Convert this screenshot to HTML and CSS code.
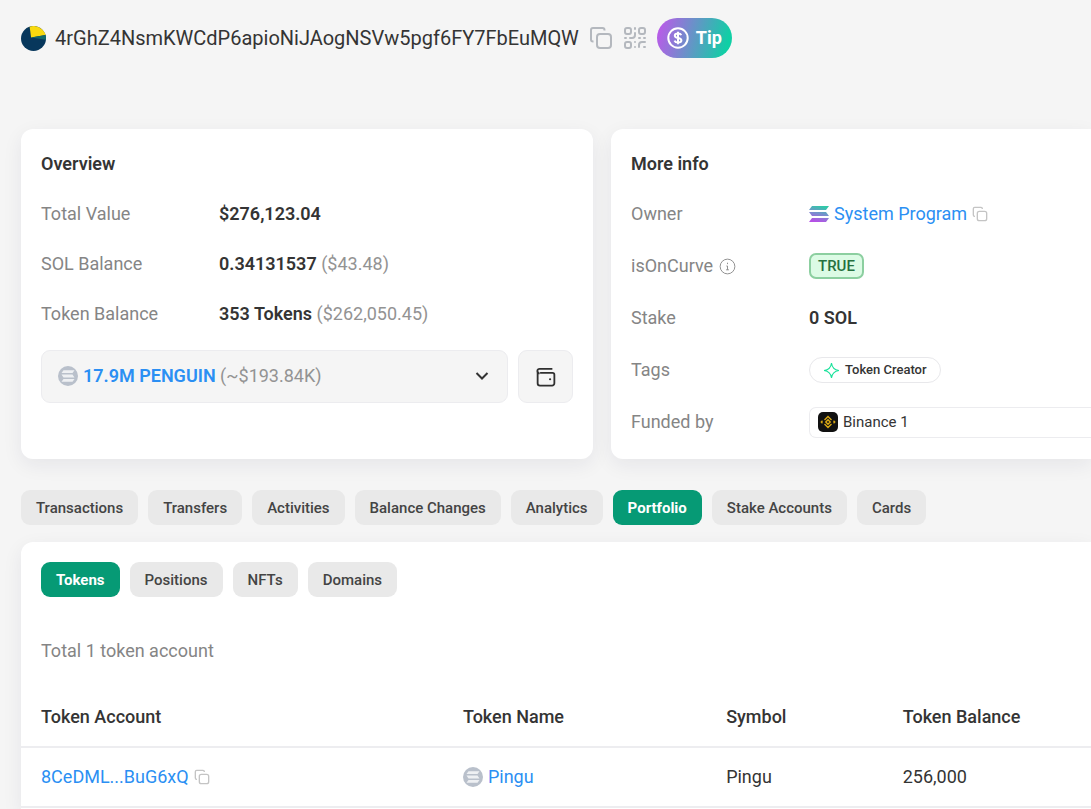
FILE: index.html
```html
<!DOCTYPE html>
<html lang="en">
<head>
<meta charset="utf-8">
<meta name="viewport" content="width=device-width, initial-scale=1">
<title>Account portfolio</title>
<link rel="stylesheet" href="styles.css">
</head>
<body>
<svg class="sprite" aria-hidden="true">
  <symbol id="copy" viewBox="0 0 24 24">
    <path d="M4.500 15.500H4a2 2 0 0 1-2-2V4a2 2 0 0 1 2-2h9.500a2 2 0 0 1 2 2v.5" />
    <rect x="8" y="8" width="14" height="14" rx="3" />
  </symbol>
  <symbol id="coin" viewBox="0 0 20 20">
    <circle cx="10" cy="10" r="10" fill="#b9c0cb"/>
    <path d="M5.500 4.200h11l-2 2.800H3.500zM3.500 8.600h11l2 2.800h-11zM5.500 13h11l-2 2.800H3.500z" fill="#eef0f3"/>
  </symbol>
</svg>
<header class="account">
  <svg class="avatar" viewBox="0 0 26 26" aria-hidden="true">
    <circle cx="13" cy="13" r="13" fill="#07375c"/>
    <path d="M10.500 12 9 .7A13 13 0 0 1 25.600 9.400z" fill="#f8d90f"/>
    <path d="M10.500 12l15.100-2.600q.6 3 .2 5z" fill="#11686a"/>
  </svg>
  <h1 class="address">4rGhZ4NsmKWCdP6apioNiJAogNSVw5pgf6FY7FbEuMQW</h1>
  <button class="icon-button" type="button" aria-label="Copy address"><svg class="icon icon-large"><use href="#copy"/></svg></button>
  <button class="icon-button" type="button" aria-label="Show QR code">
    <svg class="icon icon-large icon-qr" viewBox="0 0 24 24">
      <rect x="2" y="2" width="6" height="6" rx="2"/><rect x="16" y="2" width="6" height="6" rx="2"/><rect x="2" y="16" width="6" height="6" rx="2"/>
      <path d="M12 2v1M12 7v2a3 3 0 0 1-3 3H7M2 12h1M12 16v0M16 12h1M21 12h1M12 21v0M16 21v-2a3 3 0 0 1 3-3h3M21 21h1"/>
    </svg>
  </button>
  <button class="tip" type="button">
    <svg class="tip-icon" viewBox="0 0 22 22" aria-hidden="true"><circle cx="11" cy="11" r="9.700"/><path d="M14.300 8.200c-.5-1.100-1.700-1.700-3.300-1.700-1.900 0-3.200.8-3.200 2.200 0 3.100 6.600 1.400 6.600 4.500 0 1.500-1.400 2.300-3.400 2.300-1.800 0-3-.7-3.500-1.900M11 4.800v12.400"/></svg>
    Tip
  </button>
</header>
<main>
  <div class="cards">
    <section class="card">
      <h2 class="card-title">Overview</h2>
      <dl class="facts">
        <dt>Total Value</dt><dd><b>$276,123.04</b></dd>
        <dt>SOL Balance</dt><dd><b>0.34131537</b> <span class="muted">($43.48)</span></dd>
        <dt>Token Balance</dt><dd><b>353 Tokens</b> <span class="muted">($262,050.45)</span></dd>
      </dl>
      <div class="picker">
        <button class="picker-main" type="button" aria-haspopup="listbox">
          <svg class="coin" aria-hidden="true"><use href="#coin"/></svg>
          <span class="picker-label"><b class="blue">17.9M PENGUIN</b> <span class="muted">(~$193.84K)</span></span>
          <svg class="chevron" viewBox="0 0 14 14" aria-hidden="true"><path d="M1.500 4l5.500 5.500L12.500 4"/></svg>
        </button>
        <button class="picker-wallet" type="button" aria-label="Open wallet">
          <svg class="wallet" viewBox="0 0 22 22" aria-hidden="true"><path d="M18 2H4a2.500 2.500 0 0 0 0 5M1.800 4.500V18A2.500 2.500 0 0 0 4.300 20.500H17.700A2.500 2.500 0 0 0 20.200 18V8.500A2 2 0 0 0 18.200 6.500H4.500"/><circle cx="15.500" cy="13.500" r="1.200"/></svg>
        </button>
      </div>
    </section>
    <section class="card card-bleed">
      <h2 class="card-title">More info</h2>
      <dl class="facts facts-info">
        <dt>Owner</dt>
        <dd>
          <svg class="solana" viewBox="0 0 20 16" aria-hidden="true">
            <defs><linearGradient id="sol" gradientUnits="userSpaceOnUse" x1="12" y1="0" x2="8" y2="16"><stop offset="0" stop-color="#2fc9a8"/><stop offset=".5" stop-color="#7b8ccf"/><stop offset="1" stop-color="#b64fe6"/></linearGradient></defs>
            <path d="M3 0h17l-3 4H0zM0 6h17l3 4H3zM3 12h17l-3 4H0z" fill="url(#sol)"/>
          </svg>
          <a class="blue" href="#owner">System Program</a>
          <button class="icon-button" type="button" aria-label="Copy owner"><svg class="icon icon-light"><use href="#copy"/></svg></button>
        </dd>
        <dt>isOnCurve <svg class="info" viewBox="0 0 18 18" aria-hidden="true"><circle cx="9" cy="9" r="7.800"/><path d="M9 5v1.500M7.800 8.500H9v4M7.500 12.500h3"/></svg></dt>
        <dd><span class="true">TRUE</span></dd>
        <dt>Stake</dt><dd><b>0 SOL</b></dd>
        <dt>Tags</dt>
        <dd><span class="tag"><svg class="spark" viewBox="0 0 16 16" aria-hidden="true"><path d="M8 1Q8.800 7.200 15 8 8.800 8.800 8 15 7.200 8.800 1 8 7.200 7.200 8 1z"/></svg>Token Creator</span></dd>
        <dt>Funded by</dt>
        <dd><a class="funder" href="#binance"><svg class="binance" viewBox="0 0 20 20" aria-hidden="true"><rect width="20" height="20" rx="5" fill="#111"/><path d="M6.500 8 10 4.500 13.500 8M6.500 12l3.500 3.500 3.500-3.500M4.500 8.800 3.300 10l1.200 1.200M15.500 8.800l1.200 1.200-1.200 1.200M10 7.800 12.200 10 10 12.200 7.800 10z" fill="none" stroke="#dba914" stroke-width="1.400"/></svg>Binance 1</a></dd>
      </dl>
    </section>
  </div>
  <nav class="tabs" aria-label="Account sections">
    <button class="tab" type="button">Transactions</button>
    <button class="tab" type="button">Transfers</button>
    <button class="tab" type="button">Activities</button>
    <button class="tab" type="button">Balance Changes</button>
    <button class="tab" type="button">Analytics</button>
    <button class="tab active" type="button">Portfolio</button>
    <button class="tab" type="button">Stake Accounts</button>
    <button class="tab" type="button">Cards</button>
  </nav>
  <section class="panel">
    <nav class="tabs panel-tabs" aria-label="Portfolio sections">
      <button class="tab active" type="button">Tokens</button>
      <button class="tab" type="button">Positions</button>
      <button class="tab" type="button">NFTs</button>
      <button class="tab" type="button">Domains</button>
    </nav>
    <p class="total">Total 1 token account</p>
    <table class="tokens">
      <colgroup><col class="col-account"><col class="col-name"><col class="col-symbol"><col></colgroup>
      <thead><tr><th>Token Account</th><th>Token Name</th><th>Symbol</th><th>Token Balance</th></tr></thead>
      <tbody><tr>
        <td><span class="cell"><a class="blue" href="#account">8CeDML...BuG6xQ</a><button class="icon-button" type="button" aria-label="Copy token account"><svg class="icon icon-light"><use href="#copy"/></svg></button></span></td>
        <td><span class="cell"><svg class="coin" aria-hidden="true"><use href="#coin"/></svg><a class="blue" href="#pingu">Pingu</a></span></td>
        <td>Pingu</td>
        <td>256,000</td>
      </tr></tbody>
    </table>
  </section>
</main>
</body>
</html>
```
FILE: styles.css
```css
* { box-sizing: border-box; }
body {
  margin: 0;
  padding: 18px 0 0 21px;
  min-height: 100vh;
  overflow-x: hidden;
  background: #f5f5f5;
  color: #343434;
  font: 400 18px/24px Roboto, sans-serif;
}
h1, h2, p, dl, dd { margin: 0; }
svg { flex: none; fill: none; }
b { font-weight: 600; }
a { text-decoration: none; color: inherit; }
button { font: inherit; color: inherit; border: 0; cursor: pointer; }
.sprite { position: absolute; width: 0; height: 0; }
.blue { color: #2b8ff3; }
.muted { color: #939393; }

.account { display: flex; align-items: center; height: 40px; }
.avatar { width: 25px; height: 25px; margin-right: 9px; }
.address { font-size: 20px; font-weight: 400; margin-right: 10px; }
.icon-button { display: flex; padding: 0; background: none; }
.icon { width: 16px; height: 16px; stroke: #b4b8be; stroke-width: 2; }
.icon-large { width: 24px; height: 24px; }
.icon-light { stroke: #c4c4c4; }
.icon-qr { margin: 0 10px; stroke-linecap: round; }
.tip {
  display: flex; align-items: center; gap: 7px;
  height: 40px; padding: 0 10px; border-radius: 20px;
  background: linear-gradient(105deg, #b95be8 5%, #10cfa5 90%);
  color: #fff; font-weight: 700;
}
.tip-icon { width: 22px; height: 22px; stroke: #fff; stroke-width: 2; }

.cards { display: grid; grid-template-columns: minmax(0, 572fr) minmax(0, 480fr); gap: 18px; margin-top: 71px; }
.card, .panel { background: #fff; border-radius: 12px; box-shadow: 0 6px 20px rgba(30, 35, 70, .07); }
.card { padding: 23px 20px 24px; min-height: 330px; }
.card-bleed { border-radius: 12px 0 0 12px; padding-right: 0; padding-bottom: 0; }
.card-title { font-size: 18px; font-weight: 600; }
.facts { display: grid; grid-template-columns: 178px 1fr; grid-auto-rows: 50px; align-items: center; margin-top: 13px; }
.facts-info { grid-auto-rows: 52px; margin-top: 12px; }
dt { color: #858585; display: flex; align-items: center; gap: 6px; }
.facts-info dd { display: flex; align-items: center; gap: 5px; }
.info { width: 17px; height: 17px; stroke: #8b8b8b; stroke-width: 1; }
.picker { display: flex; gap: 10px; margin-top: 11px; }
.picker-main, .picker-wallet { height: 53px; background: #f5f5f5; border: 1px solid #ececef; border-radius: 9px; display: flex; align-items: center; }
.picker-main { flex: 1; gap: 5px; padding: 0 18px 2px 16px; text-align: left; }
.picker-label { flex: 1; }
.picker-wallet { width: 55px; justify-content: center; padding: 0; }
.coin { width: 20px; height: 20px; }
.chevron { width: 14px; height: 14px; stroke: #333; stroke-width: 2; }
.wallet { width: 20px; height: 20px; stroke: #303030; stroke-width: 2; }
.wallet circle { fill: #303030; stroke: none; }
.solana { width: 20px; height: 16px; }
.true { height: 26px; padding: 0 7px; border: 2px solid #8ccfa0; border-radius: 7px; background: #dcfbe5; color: #26703f; font-size: 15px; font-weight: 500; line-height: 22px; }
.tag { display: flex; align-items: center; gap: 5px; height: 26px; padding: 0 13px; border: 1px solid #e8e8eb; border-radius: 13px; font-size: 13px; font-weight: 500; }
.spark { width: 17px; height: 17px; stroke: #19e29b; stroke-width: 1; }
.funder { flex: 1; display: flex; align-items: center; gap: 5px; height: 31px; padding: 0 8px; border: 1px solid #ececef; border-right: 0; border-radius: 7px 0 0 7px; font-size: 15px; }
.binance { width: 20px; height: 20px; }

.tabs { display: flex; gap: 10px; margin: 31px 0 17px; }
.tab { height: 35px; padding: 0 15px; border-radius: 9px; background: #e9e9e9; color: #444; font-size: 15px; font-weight: 500; white-space: nowrap; }
.tab.active { background: #069a75; color: #fff; font-weight: 700; }
.panel { border-radius: 12px 0 0 0; padding-top: 20px; min-height: 268px; }
.panel-tabs { margin: 0 20px; }
.total { color: #858585; margin: 42px 20px 24px; }
.tokens { width: 100%; table-layout: fixed; border-collapse: collapse; }
.col-account { width: 41.300%; }
.col-name { width: 24.600%; }
.col-symbol { width: 16.500%; }
.tokens th, .tokens td { height: 60px; padding: 0 0 0 20px; text-align: left; border-bottom: 2px solid #ededf0; }
.tokens th:not(:first-child), .tokens td:not(:first-child) { padding-left: 0; }
.tokens th { font-weight: 500; }
.cell { display: flex; align-items: center; gap: 5px; }
```
